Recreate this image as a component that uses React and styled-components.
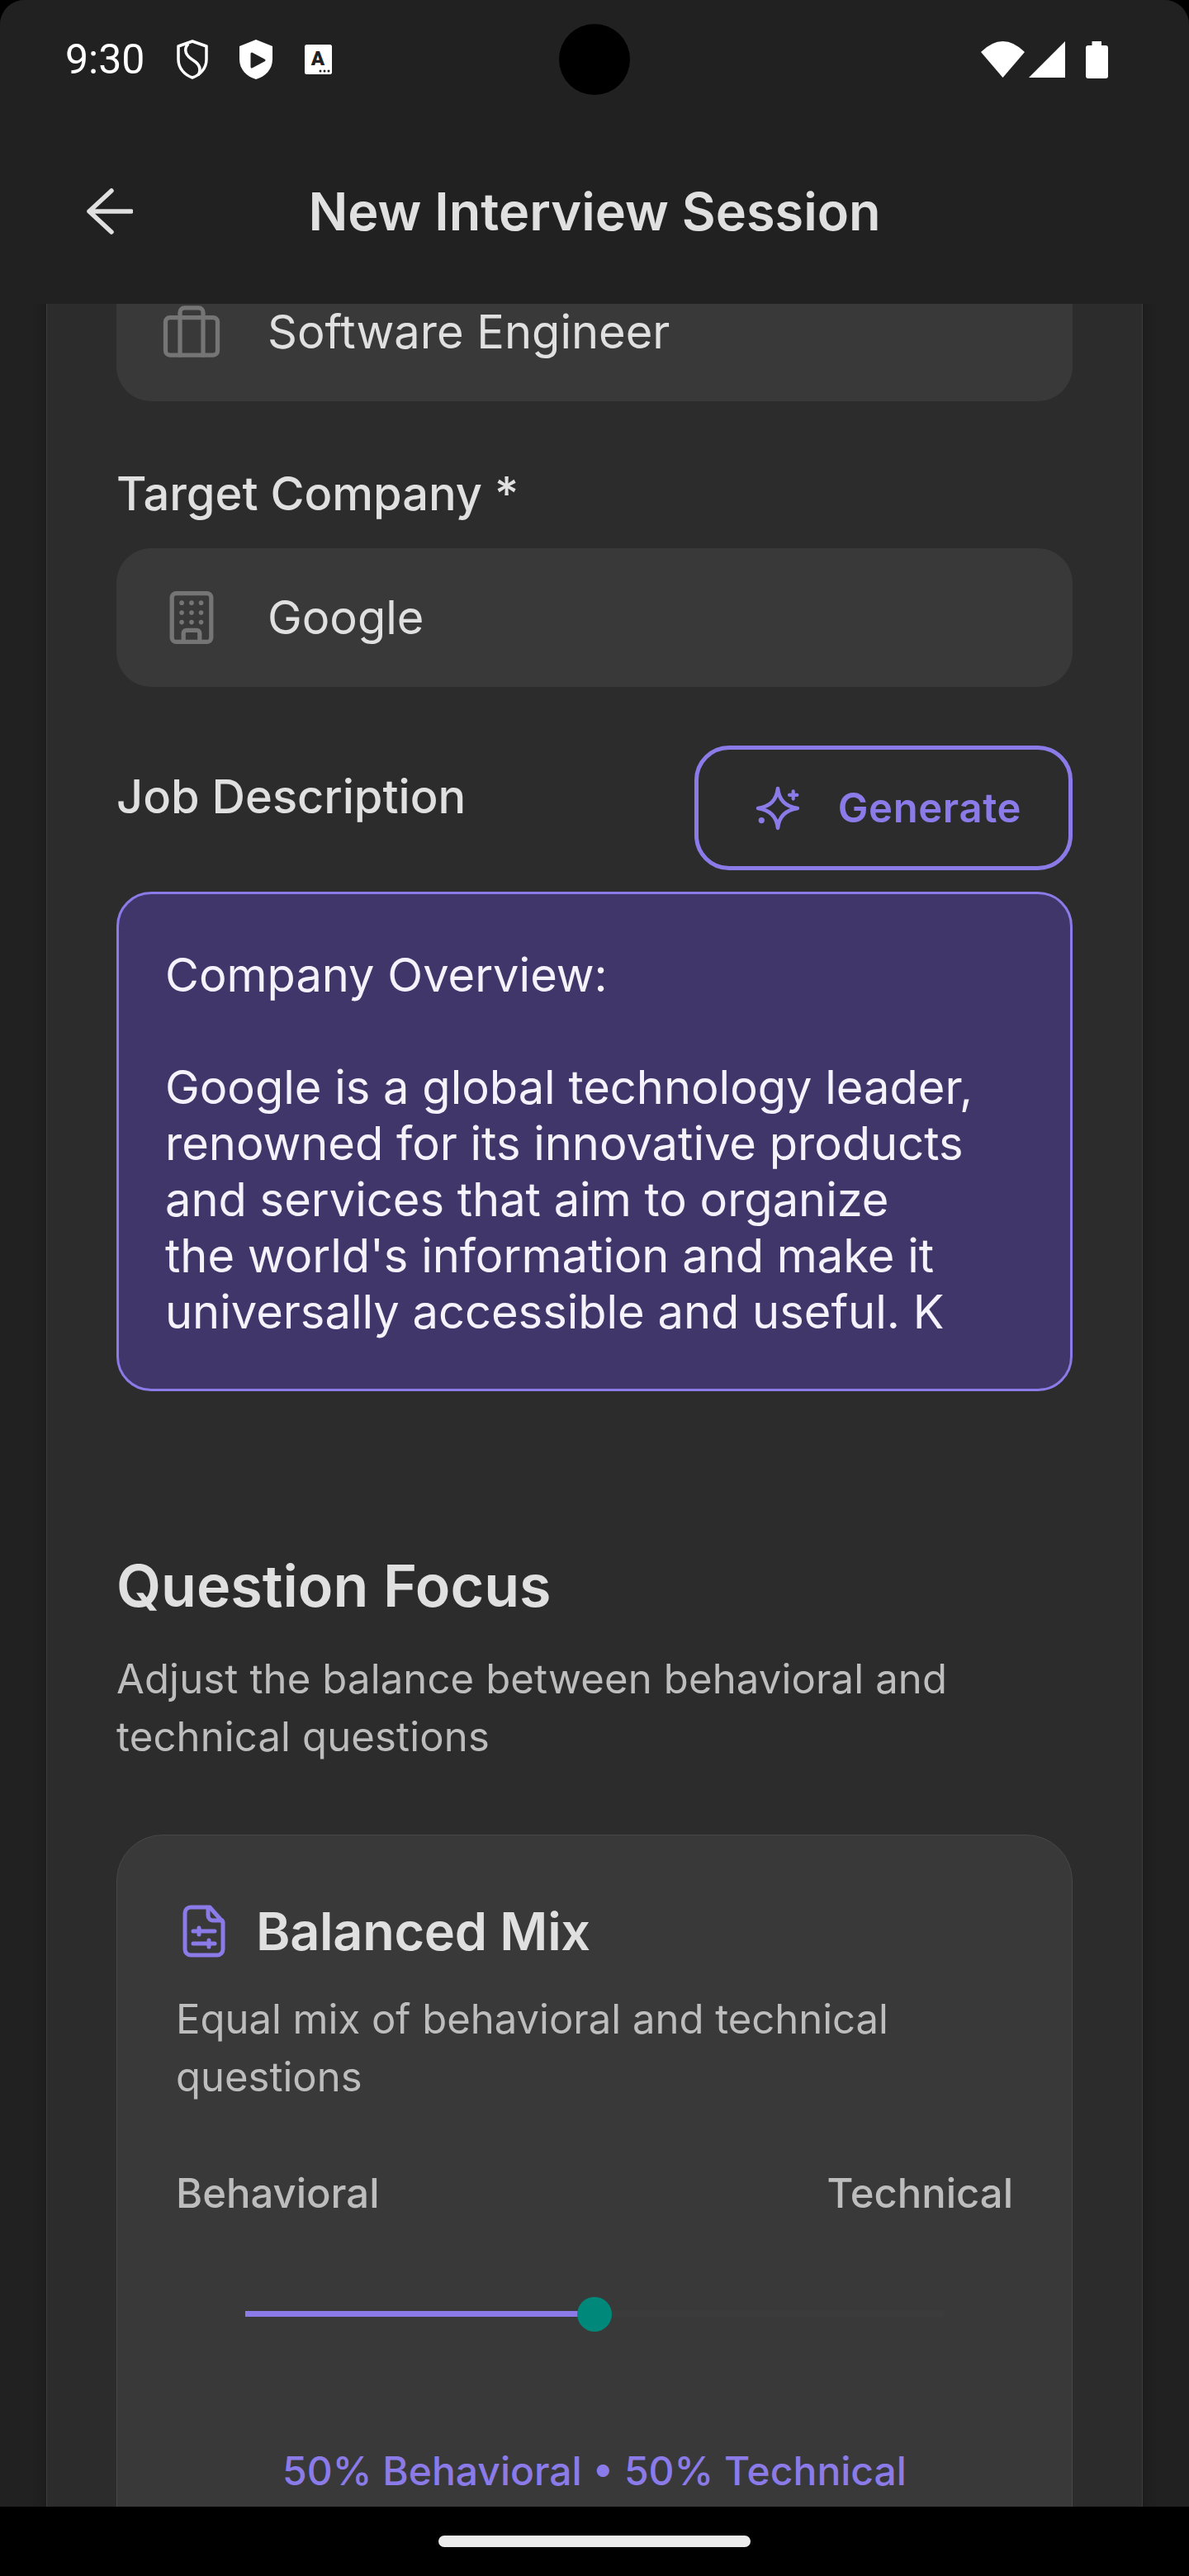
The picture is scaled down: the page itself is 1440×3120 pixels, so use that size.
import React from "react";
import styled, { createGlobalStyle } from "styled-components";

const GlobalStyle = createGlobalStyle`
  html, body {
    margin: 0;
    padding: 0;
    background: #000;
  }
  body {
    font-family: "Inter", "Noto Sans", sans-serif;
  }
`;

const Screen = styled.div`
  position: relative;
  display: flex;
  flex-direction: column;
  width: 1440px;
  height: 3120px;
  overflow: hidden;
  background: #212121;
  border-radius: 30px 30px 0 0;
`;

const Header = styled.header`
  position: relative;
  z-index: 2;
  flex: none;
  height: 368px;
  background: #212121;
`;

const StatusBar = styled.div`
  display: flex;
  align-items: center;
  justify-content: space-between;
  height: 144px;
  padding: 0 98px 0 79px;
`;

const StatusGroup = styled.div`
  display: flex;
  align-items: center;
`;

const Time = styled.span`
  font-family: "Roboto", sans-serif;
  font-size: 50px;
  line-height: 1;
  color: #fff;
  margin-right: 38px;
`;

const StatusIcon = styled.svg`
  display: block;
  flex: none;
  margin-right: ${(p) => p.$gap || 0}px;
`;

const Punch = styled.div`
  position: absolute;
  z-index: 3;
  top: 29px;
  left: 677px;
  width: 86px;
  height: 86px;
  border-radius: 50%;
  background: #000;
`;

const AppBar = styled.div`
  position: relative;
  display: flex;
  align-items: center;
  justify-content: center;
  height: 224px;
`;

const BackIcon = styled.svg`
  position: absolute;
  left: 105px;
  top: 84px;
`;

const Title = styled.h1`
  margin: 0;
  font-size: 63px;
  font-weight: 600;
  color: #e0e0e0;
`;

const Main = styled.main`
  flex: 1;
  min-height: 0;
  overflow: hidden;
`;

const Panel = styled.div`
  margin: -51px 56px 0;
  padding: 0 84px 200px;
  background: #2c2c2c;
  border: 1px solid #3b3b3b;
  box-shadow: 0 0 14px rgba(0, 0, 0, 0.25);
`;

const Label = styled.div`
  font-size: 56px;
  font-weight: 500;
  line-height: 68px;
  color: #e0e0e0;
`;

const FieldLabel = styled(Label)`
  margin: 78px 0 32px;
`;

const Field = styled.div`
  display: flex;
  align-items: center;
  gap: 50px;
  height: 168px;
  padding-left: 49px;
  background: #393939;
  border-radius: 42px;
  font-size: 56px;
  color: #e0e0e0;
`;

const JobRow = styled.div`
  display: flex;
  align-items: flex-start;
  justify-content: space-between;
  margin: 71px 0 26px;
`;

const JobLabel = styled(Label)`
  margin-top: 28px;
`;

const GenerateButton = styled.button`
  display: flex;
  align-items: center;
  justify-content: center;
  gap: 46px;
  box-sizing: border-box;
  width: 458px;
  height: 151px;
  padding: 0 0 0 12px;
  background: transparent;
  border: 5px solid #8b7be8;
  border-radius: 42px;
  font-family: inherit;
  font-size: 49px;
  font-weight: 600;
  letter-spacing: 0.6px;
  color: #8b7be8;
`;

const Description = styled.div`
  box-sizing: border-box;
  height: 605px;
  padding: 64px 56px 0;
  background: #40366a;
  border: 3.5px solid #8b7be8;
  border-radius: 42px;
  font-size: 56px;
  line-height: 68px;
  color: #f4f2fb;
`;

const SectionTitle = styled.h2`
  margin: 180px 0 0;
  font-size: 70px;
  line-height: 112px;
  font-weight: 600;
  color: #e0e0e0;
`;

const Muted = styled.p`
  margin: 0;
  font-size: 49px;
  line-height: 70px;
  color: #bdbdbd;
`;

const SectionText = styled(Muted)`
  margin-top: 22px;
  letter-spacing: 0.15px;
`;

const Card = styled.section`
  margin-top: 83px;
  padding: 84px 71px 72px;
  background: #393939;
  border: 1px solid #474747;
  border-radius: 56px;
`;

const CardTitleRow = styled.div`
  display: flex;
  align-items: center;
  gap: 37px;
  padding-left: 8px;
`;

const CardTitle = styled.h3`
  margin: 0;
  font-size: 63px;
  line-height: 64px;
  font-weight: 600;
  letter-spacing: -0.3px;
  color: #e0e0e0;
`;

const CardText = styled(Muted)`
  margin-top: 40px;
`;

const RangeLabels = styled.div`
  display: flex;
  justify-content: space-between;
  margin-top: 71px;
  font-size: 49px;
  font-weight: 500;
  line-height: 70px;
  color: #bdbdbd;
`;

const SliderWrap = styled.div`
  padding: 107px 84px 0;
`;

const SliderTrack = styled.div`
  position: relative;
  height: 7px;
  background: #3b3b3b;
`;

const SliderFill = styled.div`
  height: 100%;
  background: #8b7be8;
`;

const SliderThumb = styled.div`
  position: absolute;
  top: 50%;
  width: 42px;
  height: 42px;
  border-radius: 50%;
  background: #00897b;
  transform: translate(-50%, -50%);
`;

const Split = styled.div`
  margin-top: 152px;
  font-size: 48px;
  line-height: 70px;
  font-weight: 500;
  text-align: center;
  color: #8b7be8;
`;

const NavBar = styled.div`
  position: relative;
  z-index: 2;
  flex: none;
  display: flex;
  justify-content: center;
  height: 84px;
  padding-top: 35px;
  box-sizing: border-box;
  background: #000;
`;

const NavPill = styled.div`
  width: 378px;
  height: 14px;
  border-radius: 7px;
  background: #ebebeb;
`;

const FieldIconSvg = styled.svg`
  flex: none;
`;

const FieldIcon = ({ children }) => (
  <FieldIconSvg
    width="84"
    height="84"
    viewBox="0 0 24 24"
    fill="none"
    stroke="#757575"
    strokeWidth="1.5"
    strokeLinecap="round"
    strokeLinejoin="round"
  >
    {children}
  </FieldIconSvg>
);

const BriefcaseIcon = () => (
  <FieldIcon>
    <rect x="3" y="7" width="18" height="13" rx="1.5" />
    <path d="M8 20V5.2a1.5 1.5 0 0 1 1.5-1.5h5A1.5 1.5 0 0 1 16 5.2V20" />
  </FieldIcon>
);

const BuildingIcon = () => (
  <FieldIcon>
    <rect x="5.2" y="3.6" width="13.6" height="16.8" rx="1.5" />
    <path d="M9.2 20.4v-3a1 1 0 0 1 1-1h3.6a1 1 0 0 1 1 1v3" />
    <g fill="#757575" stroke="none">
      {[8.6, 12, 15.3].map((x) =>
        [6.9, 10.3, 13.6].map((y) => (
          <circle key={`${x}-${y}`} cx={x} cy={y} r="0.8" />
        ))
      )}
    </g>
  </FieldIcon>
);

const SparkIcon = () => (
  <FieldIconSvg width="54" height="54" viewBox="0 0 52 52" fill="none" stroke="#8b7be8" strokeWidth="4.5" strokeLinejoin="round" strokeLinecap="round">
    <path d="M26 3Q28 23 49 26Q28 29 26 49Q24 29 3 26Q24 23 26 3Z" />
    <path d="M44 6v9M39.5 10.5h9" strokeWidth="4" />
    <circle cx="7" cy="40" r="3.5" fill="#8b7be8" stroke="none" />
  </FieldIconSvg>
);

const FileSlidersIcon = () => (
  <FieldIconSvg width="52" height="64" viewBox="0 0 52 64" fill="none" stroke="#8b7be8" strokeWidth="5" strokeLinecap="round" strokeLinejoin="round">
    <path d="M10 3H33L49 21V54a7 7 0 0 1-7 7H10a7 7 0 0 1-7-7V10a7 7 0 0 1 7-7Z" />
    <path d="M31 4V13a6 6 0 0 0 6 6H48" />
    <path d="M13 32H39M20 28V36M13 47H39M32 43V51" />
  </FieldIconSvg>
);

const App = () => {
  const balance = 50;

  return (
    <>
      <GlobalStyle />
      <Screen>
        <Punch />
        <Header>
          <StatusBar>
            <StatusGroup>
              <Time>9:30</Time>
              <StatusIcon $gap={37} width="40" height="48" viewBox="0 0 40 48" fill="none" stroke="#fff" strokeWidth="3.5" strokeLinejoin="round">
                <path d="M20 2L37 8V24C37 35 29 43 20 46C11 43 3 35 3 24V8Z" />
                <path d="M15 5C8 13 13 20 21 25C29 30 31 36 27 43" />
              </StatusIcon>
              <StatusIcon $gap={39} width="40" height="48" viewBox="0 0 40 48">
                <path d="M20 0L40 8V24C40 36 31 45 20 48C9 45 0 36 0 24V8Z" fill="#fff" />
                <path d="M15 17L30 25L15 33Z" fill="#212121" stroke="#212121" strokeWidth="3" strokeLinejoin="round" />
              </StatusIcon>
              <StatusIcon width="33" height="36" viewBox="0 0 33 36">
                <rect width="33" height="36" rx="2.5" fill="#fff" />
                <text x="16" y="25" textAnchor="middle" fontFamily="Roboto, sans-serif" fontWeight="900" fontSize="24" fill="#212121">A</text>
                <g fill="#212121">
                  <circle cx="19" cy="32" r="1.5" />
                  <circle cx="24" cy="32" r="1.5" />
                  <circle cx="29" cy="32" r="1.5" />
                </g>
              </StatusIcon>
            </StatusGroup>
            <StatusGroup>
              <StatusIcon $gap={5} width="53" height="44" viewBox="0 0 53 44">
                <path d="M0 13Q26.5 -13 53 13L26.5 44Z" fill="#fff" />
              </StatusIcon>
              <StatusIcon $gap={25} width="44" height="44" viewBox="0 0 44 44">
                <path d="M44 0V44H0Z" fill="#fff" />
              </StatusIcon>
              <StatusIcon width="27" height="45" viewBox="0 0 27 45">
                <path d="M7.5 0H19V5H24a3 3 0 0 1 3 3V42a3 3 0 0 1-3 3H3a3 3 0 0 1-3-3V8a3 3 0 0 1 3-3H7.5Z" fill="#fff" />
              </StatusIcon>
            </StatusGroup>
          </StatusBar>
          <AppBar>
            <BackIcon width="56" height="56" viewBox="0 0 56 56" fill="none" stroke="#e0e0e0" strokeWidth="5.5" strokeLinecap="round" strokeLinejoin="round">
              <path d="M54 28H3M30 3L3 28L30 53" />
            </BackIcon>
            <Title>New Interview Session</Title>
          </AppBar>
        </Header>

        <Main>
          <Panel>
            <Field>
              <BriefcaseIcon />
              Software Engineer
            </Field>

            <FieldLabel>Target Company *</FieldLabel>
            <Field>
              <BuildingIcon />
              Google
            </Field>

            <JobRow>
              <JobLabel>Job Description</JobLabel>
              <GenerateButton>
                <SparkIcon />
                Generate
              </GenerateButton>
            </JobRow>
            <Description>
              Company Overview:
              <br />
              <br />
              Google is a global technology leader,
              <br />
              renowned for its innovative products
              <br />
              and services that aim to organize
              <br />
              the world's information and make it
              <br />
              universally accessible and useful. K
            </Description>

            <SectionTitle>Question Focus</SectionTitle>
            <SectionText>
              Adjust the balance between behavioral and
              <br />
              technical questions
            </SectionText>

            <Card>
              <CardTitleRow>
                <FileSlidersIcon />
                <CardTitle>Balanced Mix</CardTitle>
              </CardTitleRow>
              <CardText>
                Equal mix of behavioral and technical
                <br />
                questions
              </CardText>
              <RangeLabels>
                <span>Behavioral</span>
                <span>Technical</span>
              </RangeLabels>
              <SliderWrap>
                <SliderTrack>
                  <SliderFill style={{ width: `${balance}%` }} />
                  <SliderThumb style={{ left: `${balance}%` }} />
                </SliderTrack>
              </SliderWrap>
              <Split>50% Behavioral • 50% Technical</Split>
            </Card>
          </Panel>
        </Main>

        <NavBar>
          <NavPill />
        </NavBar>
      </Screen>
    </>
  );
};

export default App;
